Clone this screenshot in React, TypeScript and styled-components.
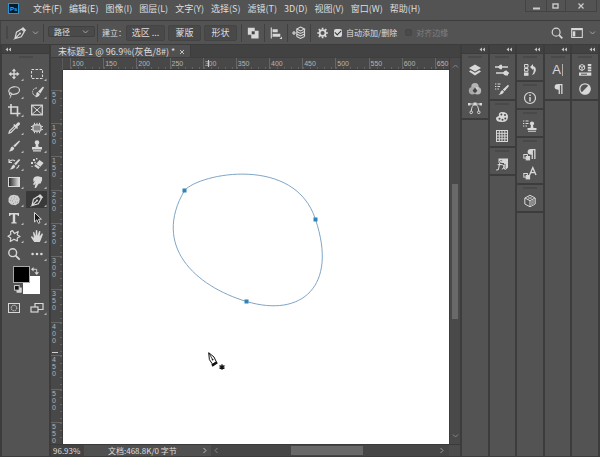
import React from "react";
import styled, { createGlobalStyle } from "styled-components";

const c = {
  panel: "#535353",
  dark: "#424242",
  line: "#3c3c3c",
  ruler: "#484848",
  text: "#dedede",
  dim: "#808080",
  icon: "#d8d8d8",
};

const Global = createGlobalStyle`
  * { box-sizing: border-box; }
  html, body { margin: 0; background: ${c.panel}; }
  body, button, select, input {
    font-family: "Noto Sans CJK SC", "Noto Sans", sans-serif;
    font-size: 9px;
    line-height: 12px;
    color: ${c.text};
  }
  button { border: 0; padding: 0; background: none; }
`;

const Shell = styled.div`
  display: flex;
  flex-direction: column;
  height: 100vh;
  min-height: 360px;
  overflow: hidden;
  background: ${c.panel};
`;

const TitleBar = styled.header`
  display: flex;
  align-items: flex-start;
  flex: none;
  height: 21px;
  padding: 0 3px 0 8px;
  border-bottom: 1px solid ${c.line};
`;

const Logo = styled.svg`
  flex: none;
  width: 11px;
  height: 11px;
  margin-top: 3px;
`;

const Menu = styled.nav`
  display: flex;
  flex: 1;
  gap: 7px;
  padding: 3px 0 0 14px;
`;

const MenuItem = styled.button`
  white-space: nowrap;
`;

const WindowButtons = styled.div`
  display: grid;
  grid-template-columns: 20px 19px 31px;
  height: 12px;
  border: 1px solid #434343;
  border-top: 0;
`;

const WindowButton = styled.button`
  display: grid;
  place-items: center;
  & + & { border-left: 1px solid #434343; }
`;

const Options = styled.div`
  display: flex;
  align-items: center;
  flex: none;
  height: 24px;
  padding: 0 4px 0 5px;
  border-bottom: 1px solid ${c.line};
  border-left: 1px solid #434343;
`;

const Grip = styled.span`
  width: 2px;
  height: 13px;
  background: #474747;
`;

const Divider = styled.span<{ $gap?: number }>`
  width: 1px;
  height: 18px;
  margin: 0 ${(p) => p.$gap ?? 5}px;
  background: #414141;
`;

const IconButton = styled.button<{ $w?: number }>`
  display: grid;
  place-items: center;
  flex: none;
  width: ${(p) => p.$w ?? 14}px;
  height: 16px;
`;

const SelectBox = styled.label`
  display: grid;
  grid-template-columns: 1fr 12px;
  align-items: center;
  width: 47px;
  height: 11px;
  margin-bottom: 3px;
  border: 1px solid #404040;
  border-radius: 2px;
  background: #4a4a4a;
`;

const Select = styled.select`
  grid-column: 1 / 3;
  grid-row: 1;
  width: 100%;
  height: 10px;
  padding: 0 0 0 5px;
  border: 0;
  background: transparent;
  appearance: none;
  font-size: 8px;
  line-height: 10px;
`;

const SelectArrow = styled.svg`
  grid-column: 2;
  grid-row: 1;
  pointer-events: none;
`;

const Label = styled.span`
  margin-left: 2px;
  font-size: 8px;
  white-space: nowrap;
`;

const OptionButton = styled.button<{ $w: number }>`
  flex: none;
  width: ${(p) => p.$w}px;
  height: 16px;
  margin-right: 3px;
  border: 1px solid #444;
  border-radius: 2px;
  background: #494949;
`;

const Check = styled.label<{ $off?: boolean }>`
  display: flex;
  align-items: center;
  gap: 4px;
  margin-right: 8px;
  white-space: nowrap;
  font-size: 8px;
  color: ${(p) => (p.$off ? c.dim : c.text)};
`;

const CheckInput = styled.input`
  width: 8px;
  height: 8px;
  margin: 0;
  appearance: none;
  border-radius: 2px;
  background: ${c.icon};
  display: grid;
  place-items: center;
  &:checked::before {
    content: "";
    width: 5px;
    height: 3px;
    margin-bottom: 1px;
    border-left: 1px solid #333;
    border-bottom: 1px solid #333;
    transform: rotate(-45deg);
  }
  &:disabled { background: #4a4a4a; border: 1px solid #454545; width: 7px; height: 7px; }
`;

const Spacer = styled.span`
  flex: 1;
`;

const Workspace = styled.main`
  display: flex;
  flex: 1;
  min-height: 0;
  gap: 2px;
  padding: 0 2px 1px;
  background: ${c.line};
`;

const Column = styled.div`
  display: flex;
  flex-direction: column;
  min-width: 0;
`;

const ToolColumn = styled(Column)`
  flex: none;
  width: 47px;
`;

const ColumnHeader = styled.button<{ $right?: boolean }>`
  display: flex;
  align-items: center;
  justify-content: ${(p) => (p.$right ? "flex-end" : "flex-start")};
  flex: none;
  height: 8px;
  padding: 0 3px;
  background: ${c.dark};
`;

const PanelGrip = styled.span`
  width: 14px;
  height: 2px;
  margin: 2px auto;
  background: #494949;
`;

const ToolPanel = styled.div`
  display: flex;
  flex-direction: column;
  flex: 1;
  margin-top: 1px;
  background: ${c.panel};
`;

const ToolGrid = styled.div`
  display: grid;
  grid-template-columns: 23px 23px;
  grid-auto-rows: 18px;
  padding-top: 5px;
`;

const Tool = styled.button<{ $active?: boolean }>`
  display: grid;
  place-items: center;
  margin: 0 1px 1px;
  border-radius: 1px;
  background: ${(p) => (p.$active ? "#393939" : "transparent")};
`;

const Swatches = styled.div`
  display: grid;
  grid-template-columns: 10px 7px 10px;
  grid-template-rows: 10px 7px 11px;
  place-items: center;
  margin: 3px 0 0 11px;
`;

const Swatch = styled.button<{ $front?: boolean }>`
  grid-area: ${(p) => (p.$front ? "1 / 1 / 3 / 3" : "2 / 2 / 4 / 4")};
  z-index: ${(p) => (p.$front ? 1 : 0)};
  width: 100%;
  height: 100%;
  background: ${(p) => (p.$front ? "#000" : "#fff")};
  border: 1px solid ${(p) => (p.$front ? "#a8a8a8" : "#fff")};
`;

const SwatchAction = styled.button<{ $area: string }>`
  display: grid;
  grid-area: ${(p) => p.$area};
`;

const Doc = styled(Column)`
  flex: 1;
`;

const TabBar = styled.div`
  display: flex;
  flex: none;
  height: 13px;
  background: ${c.dark};
  border-bottom: 1px solid #3e3e3e;
`;

const Tab = styled.div`
  display: flex;
  align-items: center;
  gap: 4px;
  padding: 2px 5px 0 7px;
  border-right: 1px solid ${c.line};
  background: #505050;
  white-space: nowrap;
`;

const TabClose = styled.button`
  display: grid;
`;

const View = styled.div`
  display: grid;
  flex: 1;
  min-height: 0;
  grid-template-columns: 12px minmax(0, 1fr) 11px;
  grid-template-rows: 12px minmax(0, 1fr) 12px;
  background: ${c.ruler};
`;

const Corner = styled.div`
  border-right: 1px solid #5a5a5a;
`;

const RulerX = styled.div`
  position: relative;
  overflow: hidden;
  border-bottom: 1px solid #3a3a3a;
  &::after {
    content: "";
    position: absolute;
    top: 2px;
    left: 145px;
    width: 1px;
    height: 7px;
    background: #d0d0d0;
  }
`;

const RulerXTrack = styled.div`
  display: grid;
  grid-template-columns: repeat(12, 1fr);
  width: 398px;
  height: 100%;
  margin-left: 7px;
`;

const ticks = (dir: string) => `
  background-image: repeating-linear-gradient(${dir}, #636363 0 1px, transparent 1px 7px);
`;

const MarkX = styled.span`
  padding: 2px 0 0 1px;
  border-left: 1px solid #666;
  font: 7px/8px "Liberation Sans", sans-serif;
  color: #b4b4b4;
  ${ticks("to right")}
  background-size: 100% 2px;
  background-position: left bottom;
  background-repeat: no-repeat;
`;

const RulerY = styled.div`
  position: relative;
  overflow: hidden;
  border-right: 1px solid #3a3a3a;
  &::after {
    content: "";
    position: absolute;
    top: 282px;
    left: 1px;
    width: 6px;
    height: 1px;
    background: #d0d0d0;
  }
`;

const RulerYTrack = styled.div`
  display: grid;
  grid-template-rows: repeat(12, 1fr);
  height: 398px;
  margin-top: 20px;
`;

const MarkY = styled.span`
  display: flex;
  flex-direction: column;
  padding-left: 1px;
  border-top: 1px solid #666;
  font: 7px/7px "Liberation Sans", sans-serif;
  color: #b4b4b4;
  ${ticks("to bottom")}
  background-size: 2px 100%;
  background-position: right top;
  background-repeat: no-repeat;
`;

const Canvas = styled.div`
  overflow: hidden;
  background: #fff;
`;

const Artwork = styled.svg`
  display: block;
`;

const ScrollY = styled.div`
  display: flex;
  flex-direction: column;
  align-items: center;
  grid-column: 3;
  grid-row: 1 / 3;
  padding: 5px 1px;
  border-left: 1px solid ${c.line};
  background: #494949;
`;

const ScrollX = styled.div`
  display: flex;
  align-items: center;
  flex: 1;
  padding: 0 4px 0 2px;
  background: #464646;
`;

const Stretch = styled.span<{ $grow: number }>`
  flex: ${(p) => p.$grow} 1 0;
`;

const Thumb = styled.span<{ $grow: number }>`
  flex: ${(p) => p.$grow} 1 0;
  align-self: stretch;
  margin: 1px 0;
  background: #696969;
`;

const ThumbY = styled(Thumb)`
  margin: 0 1px;
`;

const ScrollArrow = styled.button`
  display: grid;
`;

const Status = styled.footer`
  display: flex;
  align-items: stretch;
  grid-column: 1 / 4;
  padding-right: 11px;
  border-top: 1px solid #3a3a3a;
  background: #4c4c4c;
`;

const Zoom = styled.input`
  width: 33px;
  height: 11px;
  padding: 0 0 0 2px;
  border: 0;
  background: #434343;
  font-size: 8px;
  line-height: 11px;
`;

const DocInfo = styled.button`
  display: flex;
  align-items: center;
  justify-content: space-between;
  width: 127px;
  padding: 0 3px 0 24px;
  background: #505050;
  font-size: 8px;
  line-height: 11px;
  white-space: nowrap;
`;

const Dock = styled.aside`
  display: grid;
  grid-template-columns: repeat(5, 1fr);
  gap: 2px;
  flex: none;
  width: 136px;
`;

const DockGroup = styled.section`
  display: flex;
  flex-direction: column;
  padding-bottom: 1px;
  border-bottom: 2px solid ${c.line};
  background: ${c.panel};
`;

const DockBody = styled.div`
  flex: 1;
  margin-top: 1px;
  background: ${c.panel};
`;

const DockIcon = styled.button`
  display: grid;
  place-items: center;
  height: 19px;
`;

type Draw = React.ReactNode;

const Glyph = ({ children, size = 14 }: { children: Draw; size?: number }) => (
  <svg width={size} height={size} viewBox="0 0 14 14" fill="none" stroke={c.icon} strokeWidth="1" aria-hidden="true">
    {children}
  </svg>
);

const Solid = ({ children }: { children: Draw }) => (
  <g fill={c.icon} stroke="none">{children}</g>
);

const ToolGlyph = ({ children, plain }: { children: Draw; plain?: boolean }) => (
  <svg width="20" height="16" viewBox="-3 -1 20 16" fill="none" stroke={c.icon} aria-hidden="true">
    {children}
    {!plain && <path d="M16.5 11.5V14H14Z" fill="#b8b8b8" stroke="none" />}
  </svg>
);

const Chevron = ({ d = "down", color = "#a5a5a5" }: { d?: string; color?: string }) => {
  const paths: Record<string, string> = {
    down: "M1 2.5L3.5 5L6 2.5",
    up: "M1 4.5L3.5 2L6 4.5",
    left: "M4.5 1L2 3.5L4.5 6",
    right: "M2.5 1L5 3.5L2.5 6",
  };
  return (
    <svg width="7" height="7" viewBox="0 0 7 7" fill="none" stroke={color} aria-hidden="true">
      <path d={paths[d]} />
    </svg>
  );
};

const DoubleArrow = () => (
  <svg width="6" height="5" viewBox="0 0 6 5" fill="#c4c4c4" aria-hidden="true">
    <path d="M3 0.5V4.5L0.5 2.5ZM6 0.5V4.5L3.5 2.5Z" />
  </svg>
);

const PenShape = (
  <>
    <path d="M2 12.5L3.5 6.2L8.6 3L11.3 5.6L8.3 10.8L2 12.5L6.6 7.8" strokeWidth="1.2" />
    <circle cx="7" cy="7.4" r="1" fill={c.icon} stroke="none" />
    <path d="M8.6 2.4L10 1L13.2 4.2L11.8 5.6Z" fill={c.icon} stroke="none" />
  </>
);

const tools: { name: string; plain?: boolean; active?: boolean; art: Draw }[] = [
  { name: "移动工具", art: <><path d="M7 3V11M3 7H11" strokeWidth="1.3" /><Solid><path d="M7 1.5L9.2 4.3H4.8ZM7 12.5L9.2 9.7H4.8ZM1.5 7L4.3 4.8V9.2ZM12.5 7L9.7 4.8V9.2Z" /></Solid></> },
  { name: "矩形选框工具", art: <rect x="1.5" y="2.5" width="11" height="9" strokeDasharray="2.6 1.4" strokeWidth="1.1" /> },
  { name: "套索工具", art: <><ellipse cx="7.2" cy="5.6" rx="5.4" ry="3.7" strokeWidth="1.2" transform="rotate(-10 7 6)" /><circle cx="3.6" cy="9" r="1.3" /><path d="M3.6 10.2Q4.6 12 2.6 13" /></> },
  { name: "快速选择工具", art: <><path d="M7 3A4 4 0 1 0 6.2 11" strokeDasharray="1.8 .8" /><Solid><path d="M13 1.6L14 2.6L10.4 8.4L8 6.6ZM7.5 7L9.9 9.1Q9.4 12.2 5.2 12.2Q6.8 10.6 6.2 8.8Q6.6 7.2 7.5 7Z" /></Solid></> },
  { name: "裁剪工具", art: <path d="M4 1V10.5H13.5M1 4H10.5V13.5" strokeWidth="1.6" /> },
  { name: "图框工具", plain: true, art: <><rect x="1.7" y="2.2" width="10.6" height="9.6" strokeWidth="1.3" /><path d="M2 2.5L12 11.5M12 2.5L2 11.5" /></> },
  { name: "吸管工具", art: <><path d="M7.8 4.8L2.6 10L2 12L4 11.4L9.2 6.2" strokeWidth="1.2" /><Solid><path d="M6.2 4L7.3 2.9L8.4 4L10.4 1.7Q11.6 .8 12.8 1.8Q13.5 3 12.4 4L10.2 6L11.1 7L10 8Z" /></Solid></> },
  { name: "修补工具", art: <><rect x="3" y="3.8" width="8" height="6.4" rx="1.5" fill="#858585" strokeWidth="1.3" /><path d="M4.5 1.8V3.5M7 1.8V3.5M9.5 1.8V3.5M4.5 10.5V12.2M7 10.5V12.2M9.5 10.5V12.2M1 5.5H2.7M1 8.5H2.7M11.3 5.5H13M11.3 8.5H13" /></> },
  { name: "画笔工具", art: <Solid><path d="M12.2 1.4L13 2.4L7.9 8.3L6.2 6.8ZM5.6 7.5L7.3 9Q6.8 12.4 1.6 12.4Q3.6 11.3 3.6 9.2Q4.2 7.6 5.6 7.5Z" /></Solid> },
  { name: "仿制图章工具", art: <Solid><circle cx="7" cy="3.6" r="2.3" /><path d="M6 5H8L8.6 8H12V10.6H2V8H5.4ZM3 11.3H11V12.4H3Z" /></Solid> },
  { name: "历史记录画笔工具", art: <><Solid><path d="M12 2L13.2 3L8.9 8.3L7.1 6.8ZM6.6 7.5L8.3 9Q7.6 12.4 2.6 12.4Q4.8 11.3 4.8 9.2Z" /></Solid><path d="M2 5Q5 1.5 8 4M2 2V5.5H5M9.5 11.5Q12 10 12 8" strokeWidth="1.1" /></> },
  { name: "橡皮擦工具", art: <><Solid><path d="M9.5 3L13.6 6L8.4 12L4.2 9Z" /><path d="M3 2H5V4H3ZM6 1H7.4V2.4H6ZM1 5H3V7H1ZM4.4 4.8H5.8V6.2H4.4ZM1.5 9H2.6V10H1.5Z" /></Solid><path d="M6 7.2L10.2 10" stroke={c.panel} strokeWidth=".8" /></> },
  { name: "渐变工具", art: <><defs><linearGradient id="fade"><stop stopColor="#222" /><stop offset="1" stopColor="#e8e8e8" /></linearGradient></defs><rect x="1.5" y="2.5" width="11" height="9" fill="url(#fade)" /></> },
  { name: "涂抹工具", art: <Solid><path d="M3.2 4.4Q3.8 1.2 8 1.3L12 2.2Q13 5.5 10.6 8.4L8.6 8.8L6 13H4.6L5.6 8.3L4.2 10.2L3 9.3L5.2 5.6L3.6 7Z" /></Solid> },
  { name: "海绵工具", art: <><path d="M3.5 2.5L7 1.8L11 2.8L12.8 6L12 10L8.5 12.2L4 11.6L1.5 9L1.6 5Z" fill="#cfcfcf" stroke="none" /><path d="M4 5H5M7 4H8M9.5 6H10.5M5 8H6M8 9H9M3 7.3H4M10 9.3H11M6.5 6.2H7.4M6 10.4H7" stroke="#999" /></> },
  { name: "钢笔工具", active: true, art: PenShape },
  { name: "横排文字工具", art: <Solid><path d="M2 2H12V5H11Q10.7 3.5 8.2 3.6V10.7Q8.2 11.4 9.7 11.5V12.4H4.3V11.5Q5.8 11.4 5.8 10.7V3.6Q3.3 3.5 3 5H2Z" /></Solid> },
  { name: "路径选择工具", art: <path d="M4.5 1.5V11L6.8 8.8L8.5 12.4L10 11.6L8.5 8.2H11.4Z" fill="#181818" strokeWidth="1" /> },
  { name: "自定形状工具", art: <path d="M5.5 1.6L7.5 4.6L11.2 2.5L10.2 5.8L13 7.5L10.3 9L10.3 12L7 10.2L3.2 12.4L3.8 9L1 7.2L3.8 5.4L3.6 2.6Z" strokeWidth="1.2" strokeLinejoin="round" /> },
  { name: "抓手工具", art: <Solid><path d="M4.2 13L1 8.2Q.8 7 2 7.2L4 9L3 3.6Q3.5 2.4 4.4 3.4L5.6 7L5.8 1.6Q6.6 .6 7.3 1.6L7.5 6.8L9 2.2Q10 1.5 10.4 2.6L9.6 7.4L11.8 4.6Q12.9 4.2 12.9 5.4L10.8 11L9.8 13Z" /></Solid> },
  { name: "缩放工具", plain: true, art: <><circle cx="5.7" cy="5.7" r="3.9" strokeWidth="1.4" /><path d="M8.6 8.6L12.7 12.7" strokeWidth="1.8" /></> },
  { name: "编辑工具栏", art: <Solid><circle cx="2.6" cy="7" r="1.3" /><circle cx="7" cy="7" r="1.3" /><circle cx="11.4" cy="7" r="1.3" /></Solid> },
];

const art = {
  layers: <Solid><path d="M7 1.5L13 5L7 8.5L1 5Z" /><path d="M2.6 7.2L7 9.8L11.4 7.2L13 8.4L7 12.4L1 8.4Z" /></Solid>,
  channels: <g stroke="none"><circle cx="7" cy="4.8" r="3.7" fill="#b5b5b5" /><circle cx="4.5" cy="8.8" r="3.7" fill="#a8a8a8" /><circle cx="9.5" cy="8.8" r="3.7" fill="#d2d2d2" opacity=".8" /><path d="M7 5.4L9.4 8.7L7 11.2L4.6 8.7Z" fill="#444" /></g>,
  paths: <><path d="M1 3H13M7 3Q3.5 4 3.2 11M7 3Q10.5 4 10.8 11" /><Solid><path d="M5.5 1.5H8.5V4.5H5.5ZM0 2H2.4V4.4H0ZM11.6 2H14V4.4H11.6Z" /></Solid><circle cx="3.2" cy="11.3" r="1.3" fill={c.panel} /><circle cx="10.8" cy="11.3" r="1.3" fill={c.panel} /></>,
  brushSettings: <><path d="M0 4H13M1 10H14" strokeWidth="1.5" /><Solid><path d="M3 4L5 1.8H7V6.2H5Z" /><path d="M8 10Q9 7 11.5 7.5Q13.5 8.5 13 12.5H10.5Q8.5 12 8 10Z" /></Solid></>,
  brushes: <><path d="M0 2H1.3M2.5 2H5.5M0 4.5H1.3M2.5 4.5H5M0 7H1.3M2.5 7H4" /><Solid><path d="M13 2.8L14 4L9.6 9.2L7.8 7.6ZM7.2 8.1L9 9.8Q8 12.8 3.2 12.8Q5.5 11.6 5.7 9.4Z" /></Solid></>,
  palette: <><path d="M7 2Q13 2 13 6.8Q13 12 7 12Q1 12 1 8.5Q1 6.8 3 6.6Q4.3 6.2 3.8 4.7Q4 2.2 7 2Z" fill={c.icon} stroke="none" /><g fill="#484848" stroke="none"><circle cx="6.4" cy="4.5" r="1" /><circle cx="10" cy="5" r="1" /><circle cx="4.5" cy="8.8" r="1" /><circle cx="7.5" cy="9.7" r="1" /><circle cx="10.3" cy="8.4" r="1" /></g></>,
  grid: <><rect x="1.5" y="1.5" width="11" height="11" /><path d="M1.5 4.3H12.5M1.5 7H12.5M1.5 9.8H12.5M4.3 1.5V12.5M7 1.5V12.5M9.8 1.5V12.5" /></>,
  history: <><path d="M1.5 1.5H5V4.3H1.5ZM1.5 5.5H5V8.3H1.5Z" /><Solid><path d="M1 9.5H5.5V12.8H1Z" /><path d="M7 4L10 1V3Q13.5 4 12.7 8Q12 11 9 12Q10.8 9 10.8 7.5Q10.8 5.7 10 5.4V7Z" /></Solid></>,
  info: <><circle cx="7" cy="7" r="5.5" strokeWidth="1.2" /><path d="M7 6V10.4M7 3.6V5" strokeWidth="1.5" /></>,
  clone: <><path d="M0 2H1.3M2.5 2H5.5M0 4.5H1.3M2.5 4.5H5.5M0 7H1.3M2.5 7H4" /><Solid><circle cx="9" cy="4.5" r="2.1" /><path d="M8 6H10L10.5 9H13.5V11H4.5V9H7.5ZM5 11.8H13V12.7H5Z" /></Solid></>,
  box: <><path d="M7 1.3L12.2 4V10L7 12.8L1.8 10V4ZM2 4L7 6.7L12 4M7 6.7V12.8" /><path d="M4.4 2.7L9.5 5.4M9.5 2.7L4.4 5.4" strokeWidth=".6" /><path d="M7.5 7L12 4.5V10L7.5 12.3Z" fill="#8a8a8a" stroke="none" /></>,
  adjust: <><circle cx="7" cy="7" r="5.2" strokeWidth="1.3" /><path d="M10.7 3.3A5.2 5.2 0 0 1 3.3 10.7Z" fill={c.icon} stroke="none" /></>,
  library: <><path d="M4 1.5L6.6 2.8V6L4 7.5L1.4 6V2.8ZM1.4 3L4 4.4L6.6 3M4 4.4V7.5" /><Solid><path d="M9.8 1H13.3V3H9.8ZM9.8 3.8H13.3V5.8H9.8ZM9.8 6.6H13.3V8.3H9.8Z" /><path d="M1 9.5H13.3V12.7H1Z" /></Solid><path d="M3 11.2H9" stroke={c.panel} /></>,
};

const Letter = styled.span`
  display: flex;
  align-items: center;
  font-family: "Liberation Sans", sans-serif;
  font-size: 13px;
  line-height: 14px;
  color: ${c.icon};
`;

const Caret = styled.span`
  width: 1px;
  height: 12px;
  margin-left: 1px;
  background: #b0b0b0;
`;

const Pilcrow = ({ x = 0 }: { x?: number }) => (
  <Solid><path transform={`translate(${x} 0)`} d="M7 2H11.5V12H10.2V3.2H8.9V12H7.6V7.8Q3.6 7.6 3.6 5Q3.6 2.2 7 2Z" /></Solid>
);

const StyleLinks = (
  <><rect x="0.8" y="7.5" width="3.6" height="3.6" /><rect x="3.2" y="9.5" width="3.4" height="3.4" fill={c.icon} /></>
);

const effect = "M6.8 4.6Q5.2 3.6 4.7 6.2L3.6 11.6Q3.2 13.4 1.2 12.8M2.6 7.6H7M7.2 8Q8.2 7.6 8.8 9.4L9.4 11.4Q9.8 12.8 11 12M11 7.8Q10 7.8 9 9.8Q8 12.4 6.8 12.2";

type Panel = { name: string; view: Draw };
const g = (name: string, d: Draw): Panel => ({ name, view: <Glyph>{d}</Glyph> });

const dock: Panel[][][] = [
  [[g("图层", art.layers), g("通道", art.channels), g("路径", art.paths)]],
  [
    [g("画笔设置", art.brushSettings), g("画笔", art.brushes)],
    [g("颜色", art.palette), g("色板", art.grid)],
    [g("样式", <>
      <Solid><path d="M3.5 1.5H13V10.5L11.5 12H9V6H3.5Z" /></Solid>
      <path d={effect} stroke="#444" strokeWidth="2.2" />
      <path d={effect} strokeWidth="1.1" />
    </>)],
  ],
  [
    [g("历史记录", art.history)],
    [g("信息", art.info)],
    [g("仿制源", art.clone)],
    [g("段落样式", <>{StyleLinks}<Pilcrow x={1} /></>), g("字符样式", <>{StyleLinks}<path d="M6.6 9L9.8 1.8L13 9M7.7 6.6H12" strokeWidth="1.4" /></>)],
    [g("3D", art.box)],
  ],
  [[{ name: "字符", view: <Letter>A<Caret /></Letter> }, g("段落", <Pilcrow />)]],
  [[g("库", art.library), g("调整", art.adjust)]],
];

const menus = ["文件(F)", "编辑(E)", "图像(I)", "图层(L)", "文字(Y)", "选择(S)", "滤镜(T)", "3D(D)", "视图(V)", "窗口(W)", "帮助(H)"];
const marksX = Array.from({ length: 12 }, (_, i) => 100 + i * 50);
const marksY = Array.from({ length: 11 }, (_, i) => 50 + i * 50);

export default function App() {
  return (
    <Shell>
      <Global />
      <TitleBar>
        <Logo viewBox="0 0 11 11" role="img" aria-label="Ps">
          <rect x=".5" y=".5" width="10" height="10" fill="#001d2c" stroke="#2795d6" />
          <text x="2" y="8" fontSize="6" fontWeight="700" fontFamily="Liberation Sans, sans-serif" fill="#36aef4">Ps</text>
        </Logo>
        <Menu>{menus.map((m) => <MenuItem key={m}>{m}</MenuItem>)}</Menu>
        <WindowButtons>
          <WindowButton aria-label="最小化"><svg width="8" height="8"><path d="M1 6.5H8" stroke="#ccc" strokeWidth="2" /></svg></WindowButton>
          <WindowButton aria-label="最大化"><svg width="8" height="8"><rect x="1" y="2" width="5" height="4" fill="none" stroke="#ccc" strokeWidth="1.4" /></svg></WindowButton>
          <WindowButton aria-label="关闭"><svg width="8" height="8"><path d="M1.5 1.5L6.5 6.5M6.5 1.5L1.5 6.5" stroke="#ccc" strokeWidth="1.2" /></svg></WindowButton>
        </WindowButtons>
      </TitleBar>

      <Options>
        <Grip />
        <IconButton $w={24} aria-label="钢笔工具"><Glyph>{PenShape}</Glyph></IconButton>
        <Chevron />
        <Divider $gap={4} />
        <SelectBox>
          <Select aria-label="工具模式" defaultValue="路径"><option>路径</option><option>形状</option><option>像素</option></Select>
          <SelectArrow width="7" height="7" viewBox="0 0 7 7" fill="none" stroke="#a5a5a5"><path d="M1 2.5L3.5 5L6 2.5" /></SelectArrow>
        </SelectBox>
        <Divider $gap={2} />
        <Label>建立：</Label>
        <OptionButton $w={39}>选区 ...</OptionButton>
        <OptionButton $w={33}>蒙版</OptionButton>
        <OptionButton $w={33}>形状</OptionButton>
        <Divider $gap={1} />
        <IconButton $w={20} aria-label="路径操作">
          <Glyph size={12}><Solid><path d="M1 1H9V4.5H13.5V13.5H5V9H1Z" /></Solid><rect x="5.5" y="5" width="3.5" height="3.5" fill="#444" stroke="none" /></Glyph>
        </IconButton>
        <Divider $gap={1} />
        <IconButton $w={20} aria-label="路径对齐方式">
          <Glyph size={12}><path d="M1.5 .5V13.5" strokeWidth="1.3" /><Solid><path d="M3 2.5H9V6H3ZM3 8H12V11.5H3ZM14 11V14H11Z" /></Solid></Glyph>
        </IconButton>
        <Divider $gap={1} />
        <IconButton $w={20} aria-label="路径排列方式">
          <Glyph><path d="M0 7H4M2 5V9" strokeWidth="1.2" /><path d="M8.5 1L12.5 3L8.5 5L4.8 3ZM4.8 5.5L8.5 7.5L12.5 5.5M4.8 8L8.5 10L12.5 8M4.8 10.5L8.5 12.5L12.5 10.5M4.8 3V10.5M12.5 3V10.5" strokeWidth="1.1" /></Glyph>
        </IconButton>
        <Divider $gap={1} />
        <IconButton $w={22} aria-label="设置">
          <Glyph size={12}>
            <circle cx="6.5" cy="7" r="3.4" strokeWidth="2" />
            <path d="M6.5 .8V3M6.5 11V13.2M.3 7H2.5M10.5 7H12.7M2.1 2.6L3.7 4.2M9.3 9.8L10.9 11.4M2.1 11.4L3.7 9.8M9.3 4.2L10.9 2.6" strokeWidth="2" />
          </Glyph>
        </IconButton>
        <Check><CheckInput type="checkbox" defaultChecked />自动添加/删除</Check>
        <Check $off><CheckInput type="checkbox" disabled />对齐边缘</Check>
        <Spacer />
        <IconButton $w={16} aria-label="搜索"><Glyph size={12}><circle cx="6" cy="6" r="4.6" strokeWidth="1.4" /><path d="M9.5 9.5L13.2 13.2" strokeWidth="2" /></Glyph></IconButton>
        <IconButton $w={24} aria-label="工作区"><Glyph size={12}><rect x=".8" y="1.8" width="12.4" height="10.4" strokeWidth="1.2" /><path d="M1 2.7H13" strokeWidth="2" /><path d="M2 5H5V11H2Z" fill={c.icon} stroke="none" /></Glyph></IconButton>
        <Chevron />
      </Options>

      <Workspace>
        <ToolColumn>
          <ColumnHeader aria-label="展开工具栏"><DoubleArrow /></ColumnHeader>
          <ToolPanel>
            <PanelGrip />
            <ToolGrid>
              {tools.map((t) => (
                <Tool key={t.name} $active={t.active} aria-label={t.name}><ToolGlyph plain={t.plain}>{t.art}</ToolGlyph></Tool>
              ))}
            </ToolGrid>
            <Swatches>
              <Swatch $front aria-label="前景色" />
              <Swatch aria-label="背景色" />
              <SwatchAction $area="1 / 3" aria-label="切换颜色"><Glyph size={8}><path d="M3 4H10V11" strokeWidth="1.6" /><Solid><path d="M4.5 0V8L0 4ZM6 9H14L10 14Z" /></Solid></Glyph></SwatchAction>
              <SwatchAction $area="3 / 1" aria-label="默认颜色"><Glyph size={8}><rect x="5" y="5" width="8" height="8" fill={c.icon} /><rect x="1" y="1" width="8" height="8" fill="#111" strokeWidth="1.6" /></Glyph></SwatchAction>
            </Swatches>
            <ToolGrid>
              <Tool aria-label="快速蒙版"><ToolGlyph plain><rect x="1.5" y="2.5" width="11" height="9" /><circle cx="7" cy="7" r="2.8" strokeDasharray="1.4 .8" /></ToolGlyph></Tool>
              <Tool aria-label="屏幕模式"><ToolGlyph><path d="M5 2.5H13V8.5H5Z" strokeWidth="1.2" /><rect x="1" y="6" width="7" height="5" fill={c.panel} strokeWidth="1.2" /></ToolGlyph></Tool>
            </ToolGrid>
          </ToolPanel>
        </ToolColumn>

        <Doc>
          <TabBar>
            <Tab>未标题-1 @ 96.9%(灰色/8#) *<TabClose aria-label="关闭文档"><svg width="6" height="6"><path d="M1 1L5 5M5 1L1 5" stroke="#c4c4c4" /></svg></TabClose></Tab>
          </TabBar>
          <View>
            <Corner />
            <RulerX><RulerXTrack>{marksX.map((m) => <MarkX key={m}>{m}</MarkX>)}</RulerXTrack></RulerX>
            <RulerY><RulerYTrack>{marksY.map((m) => <MarkY key={m}>{String(m).split("").map((d, i) => <span key={i}>{d}</span>)}</MarkY>)}</RulerYTrack></RulerY>
            <Canvas>
              <Artwork width="386" height="374" viewBox="63 70 386 374" role="img" aria-label="闭合路径">
                <path d="M184.5 190.5C200 173 295 155 315.5 219.5C338 286 302 318 246.5 301.5C195 286 152 246 184.5 190.5Z" fill="none" stroke="#7fa5c6" />
                <path d="M182.5 188.5H186.5V192.5H182.5ZM313.5 217.5H317.5V221.5H313.5ZM244.5 299.5H248.5V303.5H244.5Z" fill="#2f83b7" />
                <path d="M208.7 352.7L209.4 359.6L212.6 364.3L216.3 361.8L214 357Z" fill="#fff" stroke="#111" />
                <path d="M209 353L212.5 359.5" stroke="#111" strokeWidth=".8" />
                <circle cx="212.6" cy="359.6" r=".9" fill="#111" />
                <path d="M211.3 364.6L216.6 361.4L217.8 363.3L212.6 366.7Z" fill="#111" />
                <path d="M222 364.2V369.8M219.5 365.6L224.5 368.4M224.5 365.6L219.5 368.4" stroke="#111" strokeWidth="1.3" />
              </Artwork>
            </Canvas>
            <ScrollY>
              <ScrollArrow aria-label="向上滚动"><Chevron d="up" color="#858585" /></ScrollArrow>
              <Stretch $grow={114} /><ThumbY $grow={135} /><Stretch $grow={113} />
              <ScrollArrow aria-label="向下滚动"><Chevron color="#858585" /></ScrollArrow>
            </ScrollY>
            <Status>
              <Zoom aria-label="缩放比例" defaultValue="96.93%" />
              <DocInfo>文档:468.8K/0 字节<Chevron d="right" color="#bbb" /></DocInfo>
              <ScrollX>
                <ScrollArrow aria-label="向左滚动"><Chevron d="left" color="#858585" /></ScrollArrow>
                <Stretch $grow={71} /><Thumb $grow={71} /><Stretch $grow={75} />
                <ScrollArrow aria-label="向右滚动"><Chevron d="right" color="#9a9a9a" /></ScrollArrow>
              </ScrollX>
            </Status>
          </View>
        </Doc>

        <Dock>
          {dock.map((col, i) => (
            <Column key={i}>
              <ColumnHeader $right aria-label="展开面板"><DoubleArrow /></ColumnHeader>
              <DockBody>
                {col.map((group, j) => (
                  <DockGroup key={j}>
                    <PanelGrip />
                    {group.map((p) => <DockIcon key={p.name} aria-label={p.name}>{p.view}</DockIcon>)}
                  </DockGroup>
                ))}
              </DockBody>
            </Column>
          ))}
        </Dock>
      </Workspace>
    </Shell>
  );
}
